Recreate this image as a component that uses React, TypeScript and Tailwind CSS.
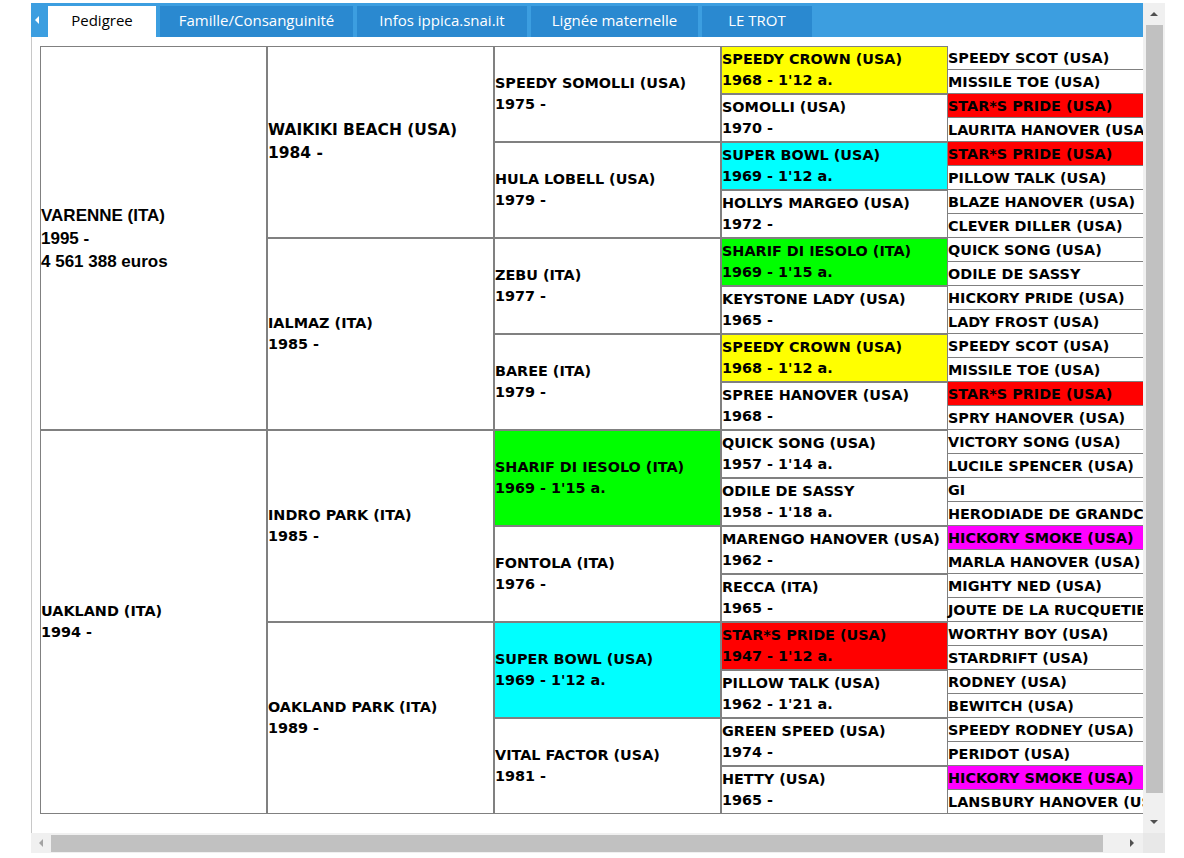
import React from "react";

type Horse = { name: string; info?: string; bg?: string };

const YEL = "bg-[#ffff00]";
const CYA = "bg-[#00ffff]";
const LIM = "bg-[#00ff00]";
const RED = "bg-[#ff0000]";
const MAG = "bg-[#ff00ff]";

const sires: Horse[] = [
  { name: "WAIKIKI BEACH (USA)", info: "1984 -" },
  { name: "IALMAZ (ITA)", info: "1985 -" },
  { name: "INDRO PARK (ITA)", info: "1985 -" },
  { name: "OAKLAND PARK (ITA)", info: "1989 -" },
];

const gen3: Horse[] = [
  { name: "SPEEDY SOMOLLI (USA)", info: "1975 -" },
  { name: "HULA LOBELL (USA)", info: "1979 -" },
  { name: "ZEBU (ITA)", info: "1977 -" },
  { name: "BAREE (ITA)", info: "1979 -" },
  { name: "SHARIF DI IESOLO (ITA)", info: "1969 - 1'15 a.", bg: LIM },
  { name: "FONTOLA (ITA)", info: "1976 -" },
  { name: "SUPER BOWL (USA)", info: "1969 - 1'12 a.", bg: CYA },
  { name: "VITAL FACTOR (USA)", info: "1981 -" },
];

const gen4: Horse[] = [
  { name: "SPEEDY CROWN (USA)", info: "1968 - 1'12 a.", bg: YEL },
  { name: "SOMOLLI (USA)", info: "1970 -" },
  { name: "SUPER BOWL (USA)", info: "1969 - 1'12 a.", bg: CYA },
  { name: "HOLLYS MARGEO (USA)", info: "1972 -" },
  { name: "SHARIF DI IESOLO (ITA)", info: "1969 - 1'15 a.", bg: LIM },
  { name: "KEYSTONE LADY (USA)", info: "1965 -" },
  { name: "SPEEDY CROWN (USA)", info: "1968 - 1'12 a.", bg: YEL },
  { name: "SPREE HANOVER (USA)", info: "1968 -" },
  { name: "QUICK SONG (USA)", info: "1957 - 1'14 a." },
  { name: "ODILE DE SASSY", info: "1958 - 1'18 a." },
  { name: "MARENGO HANOVER (USA)", info: "1962 -" },
  { name: "RECCA (ITA)", info: "1965 -" },
  { name: "STAR*S PRIDE (USA)", info: "1947 - 1'12 a.", bg: RED },
  { name: "PILLOW TALK (USA)", info: "1962 - 1'21 a." },
  { name: "GREEN SPEED (USA)", info: "1974 -" },
  { name: "HETTY (USA)", info: "1965 -" },
];

const gen5: Horse[] = [
  { name: "SPEEDY SCOT (USA)" },
  { name: "MISSILE TOE (USA)" },
  { name: "STAR*S PRIDE (USA)", bg: RED },
  { name: "LAURITA HANOVER (USA)" },
  { name: "STAR*S PRIDE (USA)", bg: RED },
  { name: "PILLOW TALK (USA)" },
  { name: "BLAZE HANOVER (USA)" },
  { name: "CLEVER DILLER (USA)" },
  { name: "QUICK SONG (USA)" },
  { name: "ODILE DE SASSY" },
  { name: "HICKORY PRIDE (USA)" },
  { name: "LADY FROST (USA)" },
  { name: "SPEEDY SCOT (USA)" },
  { name: "MISSILE TOE (USA)" },
  { name: "STAR*S PRIDE (USA)", bg: RED },
  { name: "SPRY HANOVER (USA)" },
  { name: "VICTORY SONG (USA)" },
  { name: "LUCILE SPENCER (USA)" },
  { name: "GI" },
  { name: "HERODIADE DE GRANDCHAMP" },
  { name: "HICKORY SMOKE (USA)", bg: MAG },
  { name: "MARLA HANOVER (USA)" },
  { name: "MIGHTY NED (USA)" },
  { name: "JOUTE DE LA RUCQUETIERE" },
  { name: "WORTHY BOY (USA)" },
  { name: "STARDRIFT (USA)" },
  { name: "RODNEY (USA)" },
  { name: "BEWITCH (USA)" },
  { name: "SPEEDY RODNEY (USA)" },
  { name: "PERIDOT (USA)" },
  { name: "HICKORY SMOKE (USA)", bg: MAG },
  { name: "LANSBURY HANOVER (USA)" },
];

const tabs = [
  { label: "Famille/Consanguinité", w: "w-[193px]" },
  { label: "Infos ippica.snai.it", w: "w-[170px]" },
  { label: "Lignée maternelle", w: "w-[167px]" },
  { label: "LE TROT", w: "w-[110px]" },
];

function Column({ items, h }: { items: Horse[]; h: string }) {
  return (
    <div className="flex w-[227px] shrink-0 flex-col">
      {items.map((it, i) => (
        <div
          key={i}
          className={`flex ${h} flex-col justify-center overflow-hidden whitespace-nowrap border border-[#808080] ${it.bg ?? "bg-white"}`}
        >
          <div>{it.name}</div>
          {it.info && <div>{it.info}</div>}
        </div>
      ))}
    </div>
  );
}

function Tri({ dir, color }: { dir: "up" | "down" | "left" | "right"; color: string }) {
  const pts = {
    up: "0,4 4,0 8,4",
    down: "0,0 8,0 4,4",
    left: "4,0 4,8 0,4",
    right: "0,0 0,8 4,4",
  }[dir];
  const vertical = dir === "up" || dir === "down";
  return (
    <svg width={vertical ? 8 : 4} height={vertical ? 4 : 8} viewBox={vertical ? "0 0 8 4" : "0 0 4 8"}>
      <polygon points={pts} fill={color} />
    </svg>
  );
}

export default function App() {
  return (
    <div className="h-[858px] w-[1184px] overflow-hidden bg-white pl-[31px] pt-[3px]">
      <div className="flex w-[1134px] flex-col">
        <div className="flex">
          <div className="flex w-[1112px] flex-col">
            {/* tab bar */}
            <div className="flex h-[34px] items-end gap-[4px] bg-[#3c9ee0] font-['Open_Sans',sans-serif] text-[15px]">
              <div className="flex h-full w-[13px] items-center justify-center pr-[1px]">
                <Tri dir="left" color="#ffffff" />
              </div>
              <div className="flex h-[31px] w-[108px] items-center justify-center pb-[2px] bg-white text-black">
                Pedigree
              </div>
              {tabs.map((t) => (
                <div
                  key={t.label}
                  className={`flex h-[31px] ${t.w} items-center justify-center pb-[2px] bg-[#2a89d0] text-white`}
                >
                  {t.label}
                </div>
              ))}
            </div>

            {/* pedigree table */}
            <div className="h-[796px] overflow-hidden border-l border-[#c8c8c8] pl-[8px] pt-[9px]">
              <div className="flex w-[1135px] font-['DejaVu_Sans',sans-serif] text-[14.4px] font-bold leading-[21px] text-black">
                <div className="flex w-[227px] shrink-0 flex-col">
                  <div className="flex h-[384px] flex-col justify-center border border-[#808080] font-['Liberation_Sans',Arial,sans-serif] text-[17px] font-extrabold leading-[23px]">
                    <div>VARENNE (ITA)</div>
                    <div>1995 -</div>
                    <div>4 561 388 euros</div>
                  </div>
                  <div className="flex h-[384px] flex-col justify-center border border-[#808080]">
                    <div>UAKLAND (ITA)</div>
                    <div>1994 -</div>
                  </div>
                </div>

                <div className="flex w-[227px] shrink-0 flex-col">
                  {sires.map((it, i) => (
                    <div
                      key={i}
                      className={`flex h-[192px] flex-col justify-center whitespace-nowrap border border-[#808080] ${
                        i === 0 ? "text-[15.5px] leading-[23px]" : ""
                      }`}
                    >
                      <div>{it.name}</div>
                      <div>{it.info}</div>
                    </div>
                  ))}
                </div>

                <Column items={gen3} h="h-[96px]" />
                <Column items={gen4} h="h-[48px]" />

                <div className="flex w-[227px] shrink-0 flex-col">
                  {gen5.map((it, i) => (
                    <div
                      key={i}
                      className={`flex h-[24px] items-center whitespace-nowrap border-b border-[#808080] pt-[1px] ${it.bg ?? "bg-white"}`}
                    >
                      {it.name}
                    </div>
                  ))}
                </div>
              </div>
            </div>
          </div>

          {/* vertical scrollbar */}
          <div className="flex h-[830px] w-[22px] flex-col bg-[#f0f0f0]">
            <div className="flex h-[22px] items-center justify-center">
              <Tri dir="up" color="#505050" />
            </div>
            <div className="ml-[3px] h-[768px] w-[17px] bg-[#c1c1c1]" />
            <div className="flex-1" />
            <div className="flex h-[22px] items-center justify-center">
              <Tri dir="down" color="#505050" />
            </div>
          </div>
        </div>

        {/* horizontal scrollbar */}
        <div className="flex h-[20px]">
          <div className="flex w-[1112px] bg-[#f0f0f0]">
            <div className="flex w-[20px] items-center justify-center">
              <Tri dir="left" color="#a3a3a3" />
            </div>
            <div className="mt-[2px] h-[17px] w-[1052px] bg-[#c1c1c1]" />
            <div className="flex-1" />
            <div className="flex w-[22px] items-center justify-center">
              <Tri dir="right" color="#505050" />
            </div>
          </div>
          <div className="w-[22px] bg-[#e8e8e8]" />
        </div>
      </div>
    </div>
  );
}
